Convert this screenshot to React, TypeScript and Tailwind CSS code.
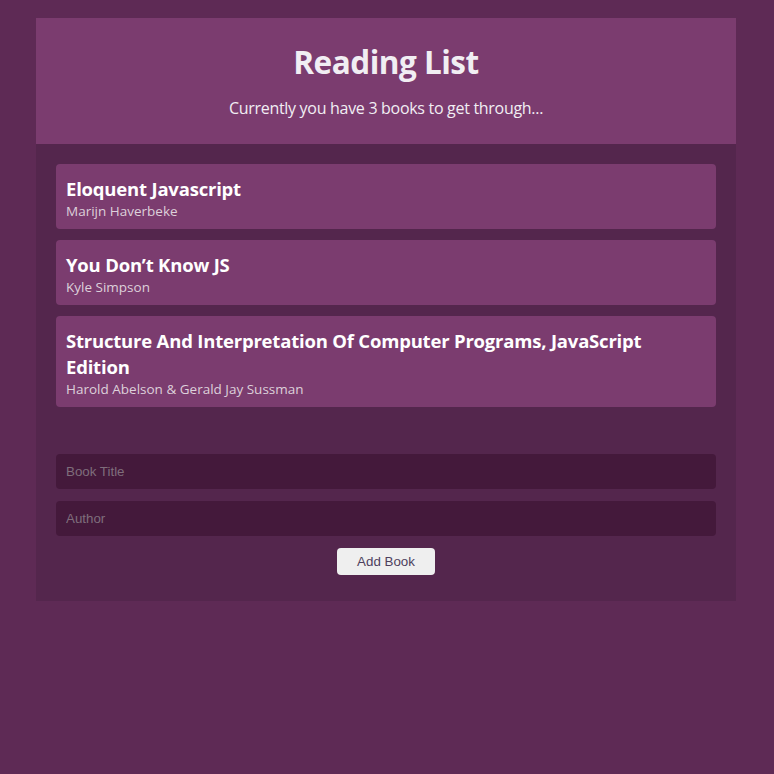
const books = [
  { title: "Eloquent Javascript", author: "Marijn Haverbeke" },
  { title: "You Don’t Know JS", author: "Kyle Simpson" },
  {
    title: "Structure And Interpretation Of Computer Programs, JavaScript Edition",
    author: "Harold Abelson & Gerald Jay Sussman",
  },
];

export default function App() {
  return (
    <div className="min-h-[774px] bg-[#5e2a55] pt-[18px] font-['Open_Sans',sans-serif]">
      <div className="ml-[36px] w-[700px] bg-[#54264d]">
        <div className="bg-[#7b3c6f] pt-[22px] pb-[26px] text-center text-[#f1eef3]">
          <h1 className="text-[31.5px] font-bold leading-[44px] tracking-[-0.5px]">Reading List</h1>
          <p className="mt-[14px] text-[16px] leading-[20px] tracking-[-0.3px]">
            Currently you have {books.length} books to get through...
          </p>
        </div>

        <ul className="flex flex-col gap-[11px] px-5 pt-5">
          {books.map((b, i) => (
            <li key={i} className="rounded bg-[#7b3c6f] px-[10px] pt-[12px] pb-[8px]">
              <div className="text-[18.5px] font-bold leading-[26px] text-white tracking-[-0.2px]">{b.title}</div>
              <div className="text-[13.5px] leading-[19px] text-[#ddd0da]">{b.author}</div>
            </li>
          ))}
        </ul>

        <form className="flex flex-col px-5 pt-[47px] pb-[26px] font-['Liberation_Sans',Arial,sans-serif]">
          <input
            type="text"
            placeholder="Book Title"
            className="h-[35px] w-full rounded bg-[#44193b] px-[10px] text-[13.33px] text-white placeholder:text-[#7f6d7b] outline-none"
          />
          <input
            type="text"
            placeholder="Author"
            className="mt-[12px] h-[35px] w-full rounded bg-[#44193b] px-[10px] text-[13.33px] text-white placeholder:text-[#7f6d7b] outline-none"
          />
          <button
            type="button"
            className="mx-auto mt-[12px] h-[27px] w-[98px] rounded bg-[#efefef] text-[13.33px] text-[#4e3f5e]"
          >
            Add Book
          </button>
        </form>
      </div>
    </div>
  );
}
